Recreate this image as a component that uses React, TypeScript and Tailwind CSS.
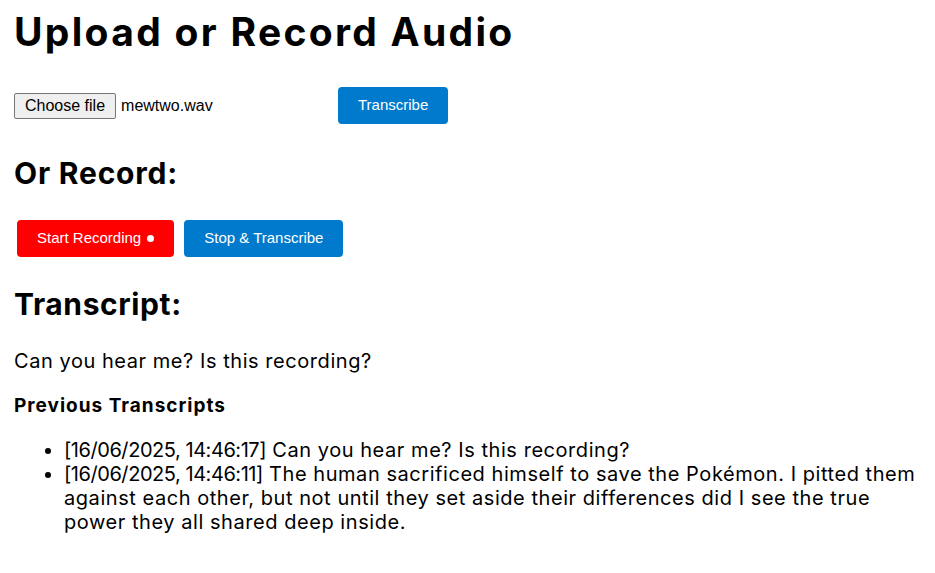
import React from "react";

const history = [
  { time: "16/06/2025, 14:46:17", text: "Can you hear me? Is this recording?" },
  {
    time: "16/06/2025, 14:46:11",
    text: "The human sacrificed himself to save the Pokémon. I pitted them against each other, but not until they set aside their differences did I see the true power they all shared deep inside.",
  },
];

const App = () => {
  return (
    <div className="min-h-screen bg-white pl-[14px] pr-[8px] pt-[8px] text-black font-['Inter',sans-serif]">
      <h1 className="text-[39px] font-bold leading-[48px] tracking-[2.3px]">Upload or Record Audio</h1>

      <div className="mt-[31px] flex items-center">
        <div className="flex w-[316px] items-center font-['Liberation_Sans',Arial,sans-serif] text-[16px]">
          <span className="flex h-[26px] items-center rounded-[2px] border border-[#767676] bg-[#efefef] px-[10px]">Choose file</span>
          <span className="ml-[5px]">mewtwo.wav</span>
        </div>
        <button className="ml-[8px] h-[37px] rounded-[4px] bg-[#007acc] px-5 font-['Liberation_Sans',Arial,sans-serif] text-[15px] text-white">
          Transcribe
        </button>
      </div>

      <h2 className="mt-[31px] text-[30px] font-bold leading-[36px] tracking-[0.8px]">Or Record:</h2>

      <div className="mt-[29px] flex gap-[10px] pl-[3px] font-['Liberation_Sans',Arial,sans-serif] text-[15px] text-white">
        <button className="flex h-[37px] items-center rounded-[4px] bg-[#ff0000] px-5">
          Start Recording
          <span className="ml-[6px] h-[7px] w-[7px] rounded-full bg-white" />
        </button>
        <button className="h-[37px] rounded-[4px] bg-[#007acc] px-5">Stop &amp; Transcribe</button>
      </div>

      <h2 className="mt-[29px] text-[30px] font-bold leading-[36px] tracking-[0.6px]">Transcript:</h2>

      <p className="mt-[27px] text-[20px] leading-[24px] tracking-[0.55px]">Can you hear me? Is this recording?</p>

      <h3 className="mt-[21px] text-[19px] font-bold leading-[24px] tracking-[1px]">Previous Transcripts</h3>

      <ul className="mt-[20px] list-disc pl-[50px] text-[20px] leading-[24px] tracking-[0.55px]">
        {history.map((h) => (
          <li key={h.time}>
            <span className="tracking-[-0.45px]">[{h.time}]</span> {h.text}
          </li>
        ))}
      </ul>
    </div>
  );
};

export default App;
